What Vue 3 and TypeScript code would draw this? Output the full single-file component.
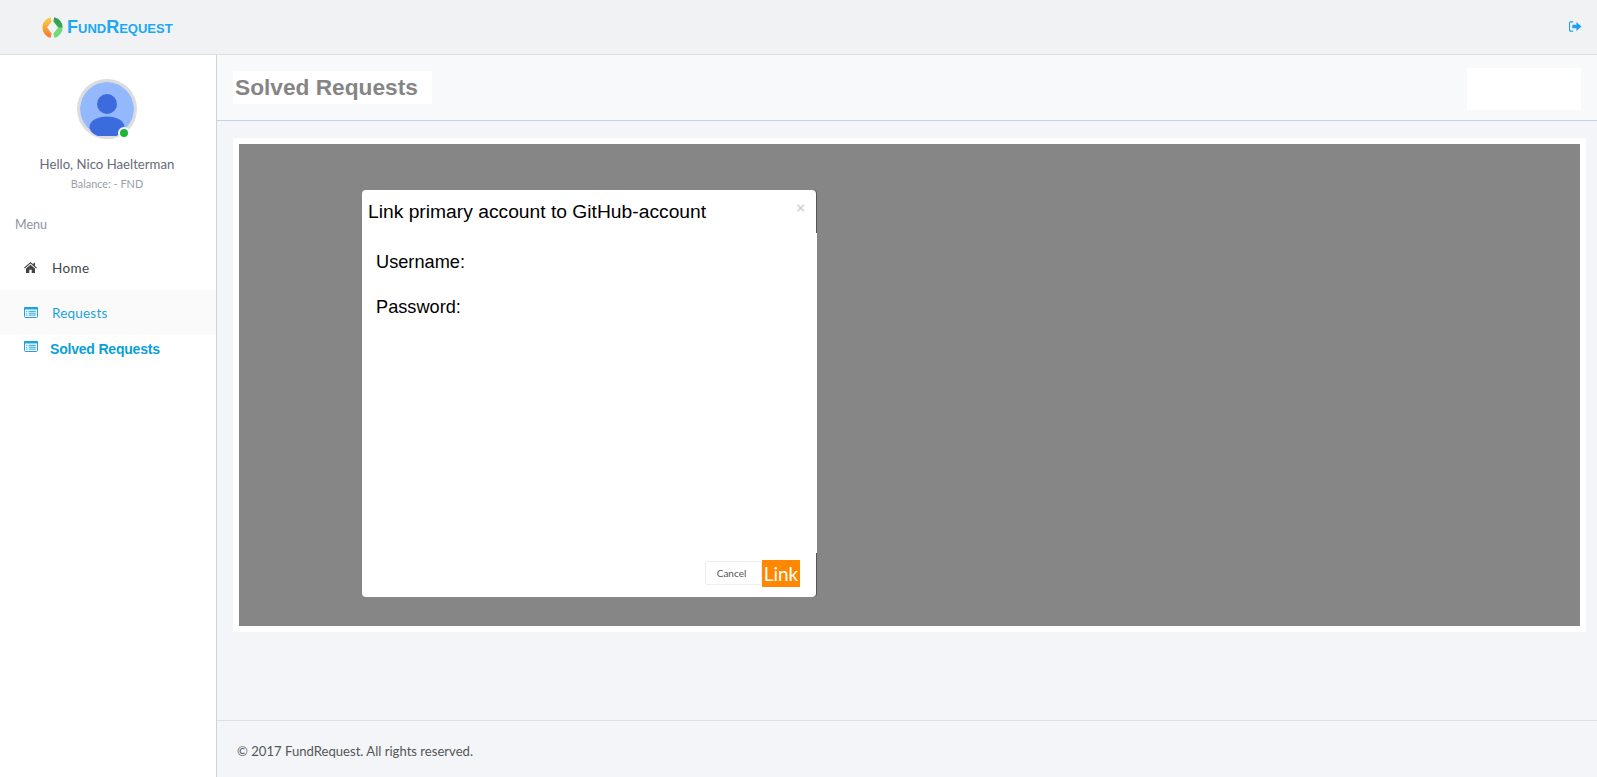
<template>
  <div class="page">
    <header class="topbar">
      <div class="brand">
        <svg class="logo" width="21" height="21" viewBox="0 0 21 21">
          <defs>
            <linearGradient id="leftArc" x1="0" y1="0" x2="0" y2="1">
              <stop offset="0" stop-color="#f8d24a" />
              <stop offset=".5" stop-color="#f6a53c" />
              <stop offset="1" stop-color="#f5762e" />
            </linearGradient>
            <linearGradient id="rightArc" x1="0" y1="0" x2="0" y2="1">
              <stop offset="0" stop-color="#2f9e4f" />
              <stop offset=".45" stop-color="#35a955" />
              <stop offset=".55" stop-color="#6fdc7a" />
              <stop offset="1" stop-color="#6fdc7a" />
            </linearGradient>
          </defs>
          <path d="M8.8 .2 A10.5 10.5 0 0 0 8.8 20.8 L9.6 16.4 L5 10.5 L9.6 4.6 Z" fill="url(#leftArc)" />
          <path d="M12.2 .2 A10.5 10.5 0 0 1 12.2 20.8 L11.4 16.4 L16.2 10.5 L11.4 4.6 Z" fill="url(#rightArc)" />
        </svg>
        <span class="brand-name"><b>F</b>UND<b>R</b>EQUEST</span>
      </div>
      <svg class="logout" width="13" height="11" viewBox="0 0 14 12">
        <path d="M4.5 1 H1.5 A1 1 0 0 0 .5 2 V10 A1 1 0 0 0 1.5 11 H4.5" fill="none" stroke="#1da1f2" stroke-width="1.2" />
        <path d="M3.5 4 H8 V1.2 L13.5 6 L8 10.8 V8 H3.5 Z" fill="#1da1f2" />
      </svg>
    </header>

    <div class="main">
      <aside class="sidebar">
        <div class="profile">
          <div class="avatar">
            <svg width="54" height="54" viewBox="0 0 54 54">
              <circle cx="27" cy="27" r="27" fill="#93b8fb" />
              <circle cx="27" cy="22" r="10" fill="#3b6bdc" />
              <ellipse cx="27" cy="45" rx="17.5" ry="10.5" fill="#3b6bdc" />
            </svg>
            <span class="status"></span>
          </div>
          <div class="hello">Hello, Nico Haelterman</div>
          <div class="balance">Balance: - FND</div>
        </div>
        <div class="menu-label">Menu</div>
        <nav class="menu">
          <a class="item">
            <svg class="ico" width="13" height="11" viewBox="0 0 13 11">
              <path d="M6.5 0 L9.5 2.6 V.8 H11 V3.9 L13 5.7 L12.2 6.5 L6.5 1.6 L.8 6.5 L0 5.7 Z" fill="#444" />
              <path d="M2 6.6 L6.5 2.8 L11 6.6 V11 H7.7 V7.8 H5.3 V11 H2 Z" fill="#444" />
            </svg>
            Home
          </a>
          <a class="item active">
            <svg class="ico" width="14" height="11" viewBox="0 0 14 11">
              <rect x=".5" y=".5" width="13" height="10" rx="1" fill="#fff" stroke="#1ba3de" />
              <rect x="0" y="0" width="14" height="2.6" rx="1" fill="#1ba3de" />
              <path d="M2.2 4.3H3.4M4.6 4.3H11.8M2.2 6.2H3.4M4.6 6.2H11.8M2.2 8.1H3.4M4.6 8.1H11.8" stroke="#1ba3de" />
            </svg>
            Requests
          </a>
          <a class="solved">
            <svg class="ico" width="14" height="11" viewBox="0 0 14 11">
              <rect x=".5" y=".5" width="13" height="10" rx="1" fill="#fff" stroke="#1ba3de" />
              <rect x="0" y="0" width="14" height="2.6" rx="1" fill="#1ba3de" />
              <path d="M2.2 4.3H3.4M4.6 4.3H11.8M2.2 6.2H3.4M4.6 6.2H11.8M2.2 8.1H3.4M4.6 8.1H11.8" stroke="#1ba3de" />
            </svg>
            <span>Solved Requests</span>
          </a>
        </nav>
      </aside>

      <div class="content">
        <div class="title-bar">
          <h1>Solved Requests</h1>
          <div class="title-box"></div>
        </div>

        <div class="body">
          <div class="card">
            <div class="backdrop">
              <div class="modal">
                <div class="modal-head">
                  <span>Link primary account to GitHub-account</span>
                  <span class="close">×</span>
                </div>
                <div class="modal-body">
                  <p>Username:</p>
                  <p>Password:</p>
                </div>
                <div class="modal-foot">
                  <button class="cancel">Cancel</button>
                  <button class="link">Link</button>
                </div>
              </div>
            </div>
          </div>
        </div>

        <footer class="foot">© 2017 FundRequest. All rights reserved.</footer>
      </div>
    </div>
  </div>
</template>

<script setup lang="ts">
</script>

<style>
html,
body {
  margin: 0;
  background: #fff;
}
</style>

<style scoped>
.page {
  height: 777px;
  display: flex;
  flex-direction: column;
  overflow: hidden;
  font-family: Lato, "Noto Sans", sans-serif;
}

.topbar {
  height: 54px;
  flex: none;
  display: flex;
  align-items: center;
  justify-content: space-between;
  padding: 0 15px 0 42px;
  background: #f1f2f4;
  border-bottom: 1px solid #dcdde0;
}

.brand {
  display: flex;
  align-items: center;
  gap: 4px;
}

.brand-name {
  font-family: "Liberation Sans", sans-serif;
  font-size: 13px;
  font-weight: 700;
  color: #1ba8f5;
}

.brand-name b {
  font-size: 18px;
}

.logout {
  margin-bottom: 2px;
}

.main {
  flex: 1;
  display: flex;
  min-height: 0;
}

.sidebar {
  width: 216px;
  flex: none;
  background: #fff;
  border-right: 1px solid #cfd3d8;
}

.profile {
  padding-top: 24px;
  text-align: center;
}

.avatar {
  position: relative;
  width: 54px;
  height: 54px;
  margin: 0 auto;
  left: -1px;
  border: 3px solid #dcdcdc;
  border-radius: 50%;
}

.avatar svg {
  display: block;
}

.status {
  position: absolute;
  right: 4px;
  bottom: -3px;
  width: 8px;
  height: 8px;
  background: #1fb53c;
  border: 2px solid #fff;
  border-radius: 50%;
}

.hello {
  margin-left: -2px;
  margin-top: 15px;
  font-size: 13.2px;
  line-height: 20px;
  color: #666c78;
}

.balance {
  margin-left: -2px;
  margin-top: 2px;
  font-size: 10.9px;
  line-height: 16px;
  color: #9a9ea6;
}

.menu-label {
  margin: 24px 0 0 15px;
  font-size: 12.5px;
  line-height: 18px;
  color: #8c93a0;
}

.menu {
  margin-top: 11px;
}

.item {
  height: 45px;
  display: flex;
  align-items: center;
  padding-left: 24px;
  font-size: 13.5px;
  letter-spacing: .4px;
  color: #444;
}

.item .ico {
  margin-right: 15px;
}

.item.active {
  color: #1ba3de;
  background: #fafafa;
  letter-spacing: .2px;
}

.item.active .ico {
  margin-right: 14px;
}

.solved {
  height: 27px;
  display: flex;
  align-items: center;
  padding-left: 24px;
  font-family: "Liberation Sans", sans-serif;
  font-size: 14px;
  font-weight: 700;
  letter-spacing: -.2px;
  color: #0a9fd8;
}

.solved .ico {
  margin: 0 12px 4px 0;
}

.content {
  flex: 1;
  min-width: 0;
  display: flex;
  flex-direction: column;
  background: #f3f5f9;
}

.title-bar {
  height: 65px;
  flex: none;
  display: flex;
  align-items: center;
  justify-content: space-between;
  padding: 0 16px;
  background: #f8f9fb;
  border-bottom: 1px solid #c3d3e3;
}

.title-bar h1 {
  margin: 0;
  padding: 0 14px 0 2px;
  background: #fff;
  font-family: "Liberation Sans", sans-serif;
  font-size: 22.7px;
  line-height: 33px;
  color: #858585;
}

.title-box {
  width: 114px;
  height: 42px;
  margin-top: 2px;
  background: #fff;
}

.body {
  flex: 1;
  padding: 17px 11px 0 16px;
}

.card {
  height: 482px;
  padding: 6px;
  background: #fff;
}

.backdrop {
  position: relative;
  height: 100%;
  background: #868686;
}

.modal {
  position: absolute;
  left: 123px;
  top: 46px;
  width: 454px;
  height: 407px;
  display: flex;
  flex-direction: column;
  font-family: "Liberation Sans", sans-serif;
  background: #fff;
  border-radius: 4px;
  box-shadow: 1px 0 0 #555;
}

.modal-head {
  height: 43px;
  flex: none;
  position: relative;
  padding: 10px 0 0 6px;
  box-sizing: border-box;
  font-size: 19.25px;
  line-height: 23px;
  color: #000;
}

.close {
  position: absolute;
  right: 11px;
  top: 6px;
  font-size: 15px;
  font-weight: 700;
  color: #d4d4d4;
}

.modal-body {
  flex: 1;
  padding: 7px 14px;
  background: #fff;
  margin-right: -1px;
  font-size: 18.2px;
  color: #000;
}

.modal-body p {
  margin: 0;
  height: 45px;
  line-height: 45px;
}

.modal-foot {
  height: 44px;
  flex: none;
  display: flex;
  align-items: flex-start;
  justify-content: flex-end;
  padding-right: 16px;
}

.cancel {
  width: 57px;
  height: 24px;
  margin-top: 8px;
  padding: 0 4px 0 0;
  border: 1px solid #eee;
  border-radius: 2px;
  background: #fff;
  font-family: Lato, sans-serif;
  font-size: 10px;
  color: #555;
}

.link {
  width: 38px;
  height: 27px;
  margin-top: 7px;
  padding: 0;
  border: 0;
  background: #ff8800;
  font-family: Lato, sans-serif;
  font-size: 19px;
  line-height: 27px;
  color: #fff;
}

.foot {
  height: 57px;
  flex: none;
  padding: 20px 0 0 20px;
  box-sizing: border-box;
  border-top: 1px solid #dde2e8;
  font-size: 13.1px;
  line-height: 20px;
  color: #555;
}
</style>
